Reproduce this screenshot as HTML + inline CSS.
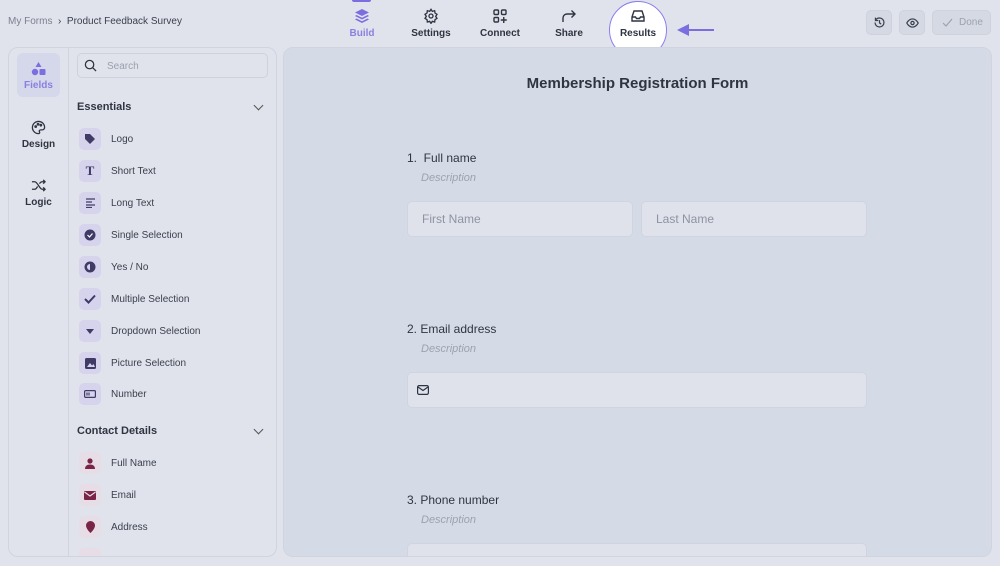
<!DOCTYPE html>
<html><head><meta charset="utf-8"><style>
*{box-sizing:border-box;margin:0;padding:0}
body{width:1000px;height:566px;background:#e0e3ec;font-family:"Liberation Sans",sans-serif;position:relative;overflow:hidden;color:#2f3441}
.a{position:absolute}
.crumb{left:8px;top:16px;font-size:10px;color:#3a3f4c}
.crumb span{color:#7c8190}
.nav{top:8px;width:60px;text-align:center;font-size:10px;font-weight:bold;color:#2f3441}
.nav svg{display:block;margin:0 auto 4px}
.btn{top:10px;height:25px;background:#d5d9e3;border-radius:5px;border:1px solid #cdd2dd}
.panel{left:8px;top:47px;width:269px;height:510px;border:1px solid #cfd4df;border-radius:10px;background:#e0e3ec}
.rail{left:68px;top:48px;width:1px;height:508px;background:#cfd4df}
.tab{left:17px;width:43px;height:44px;text-align:center;font-size:10px;font-weight:bold;color:#2f3441;border-radius:6px}
.tab svg{display:block;margin:9px auto 4px}
.search{left:77px;top:53px;width:191px;height:25px;border:1px solid #cdd2dd;border-radius:5px;font-size:10px;color:#9a9fad;padding:7px 0 0 29px}
.sec{left:77px;font-size:11px;font-weight:bold;color:#2f3441}
.chev{left:255px;width:7px;height:7px;border-right:1.3px solid #555;border-bottom:1.3px solid #555;transform:rotate(45deg)}
.it{left:79px;height:22px;width:200px;font-size:10px;color:#3a3f4c}
.ib{position:absolute;left:0;top:0;width:22px;height:22px;border-radius:5px;background:#d5d4ec;display:flex;align-items:center;justify-content:center}
.ib.r{background:#e6dde6}
.it span{position:absolute;left:32px;top:6px}
.canvas{left:283px;top:47px;width:709px;height:510px;background:#d5dbe6;border-radius:10px;border:1px solid #cfd4df}
.q{font-size:12px;color:#2f3441}
.d{font-size:11px;font-style:italic;color:#9ca2b0}
.inp{background:#dfe2eb;border:1px solid #cfd4df;border-radius:5px;font-size:12px;color:#8d93a1;padding:10px 0 0 14px}
</style></head><body>
<div class="a crumb"><span>My Forms</span> &nbsp;›&nbsp; Product Feedback Survey</div>

<div class="a" style="left:352px;top:0;width:19px;height:2px;background:#7b6fe0;border-radius:0 0 2px 2px"></div>
<div class="a nav" style="left:332px;color:#8a80e0"><svg width="16" height="16" viewBox="0 0 16 16" fill="#7b6fe0"><path d="M8 1L15 4.5 8 8 1 4.5z"/><path d="M2.5 7L8 9.8 13.5 7 15 8 8 11.5 1 8z"/><path d="M2.5 10.5L8 13.3 13.5 10.5 15 11.5 8 15 1 11.5z"/></svg>Build</div>
<div class="a nav" style="left:401px"><svg width="16" height="16" viewBox="0 0 24 24" fill="none" stroke="#2f3441" stroke-width="2"><circle cx="12" cy="12" r="3"/><path d="M12 2l2 3 3.5-1 .5 3.5 3 2-2 3 2 3-3 2-.5 3.5-3.5-1-2 3-2-3-3.5 1-.5-3.5-3-2 2-3-2-3 3-2 .5-3.5 3.5 1z"/></svg>Settings</div>
<div class="a nav" style="left:470px"><svg width="16" height="16" viewBox="0 0 16 16" fill="none" stroke="#2f3441" stroke-width="1.4"><rect x="2" y="2" width="4.5" height="4.5" rx="1"/><rect x="9.5" y="2" width="4.5" height="4.5" rx="1"/><rect x="2" y="9.5" width="4.5" height="4.5" rx="1"/><path d="M11.75 9v6M8.75 12h6"/></svg>Connect</div>
<div class="a nav" style="left:539px"><svg width="16" height="16" viewBox="0 0 16 16" fill="none" stroke="#2f3441" stroke-width="1.4"><path d="M2 14V10a4 4 0 014-4h8M10.5 2.5L14 6l-3.5 3.5"/></svg>Share</div>
<div class="a" style="left:609px;top:1px;width:58px;height:58px;border-radius:50%;background:#fff;border:1.5px solid #8a7ff0"></div>
<div class="a nav" style="left:608px"><svg width="16" height="16" viewBox="0 0 16 16" fill="none" stroke="#2f3441" stroke-width="1.4"><path d="M2 9l2-6h8l2 6v4H2z"/><path d="M2 9h3.5l1 1.5h3L10.5 9H14"/></svg>Results</div>
<svg class="a" style="left:676px;top:23px" width="40" height="14" viewBox="0 0 40 14"><path d="M12 7H38" stroke="#7b6fe0" stroke-width="2"/><path d="M1 7L13 1v12z" fill="#7b6fe0"/></svg>

<div class="a btn" style="left:866px;width:26px"><svg style="margin:5px 0 0 6px" width="13" height="13" viewBox="0 0 16 16" fill="none" stroke="#3a3f4c" stroke-width="1.5"><path d="M2.5 8a5.5 5.5 0 105.5-5.5A5.5 5.5 0 003 5.5M3 2v3.5h3.5M8 5v3.5l2 1.5"/></svg></div>
<div class="a btn" style="left:899px;width:26px"><svg style="margin:6px 0 0 6px" width="13" height="12" viewBox="0 0 16 14" fill="none" stroke="#3a3f4c" stroke-width="1.5"><path d="M1 7s2.5-5 7-5 7 5 7 5-2.5 5-7 5-7-5-7-5z"/><circle cx="8" cy="7" r="2"/></svg></div>
<div class="a btn" style="left:932px;width:59px;font-size:10px;color:#9ca2b0;padding:6px 0 0 26px"><svg class="a" style="left:9px;top:7px" width="11" height="9" viewBox="0 0 11 9" fill="none" stroke="#9ca2b0" stroke-width="1.2"><path d="M1 5l3 3 6-7"/></svg>Done</div>

<div class="a panel"></div>
<div class="a rail"></div>
<div class="a tab" style="top:53px;background:#d5d7ea;color:#8a80e0"><svg width="15" height="14" viewBox="0 0 15 14" fill="#7b6fe0"><path d="M7.5 0l3 5h-6z"/><circle cx="4" cy="10" r="3.2"/><rect x="8.5" y="7" width="6" height="6" rx="1"/></svg>Fields</div>
<div class="a tab" style="top:111px"><svg width="15" height="15" viewBox="0 0 16 16" fill="none" stroke="#2f3441" stroke-width="1.4"><path d="M8 1.5a6.5 6.5 0 000 13c1.2 0 1.5-1 1-2s0-2 1.5-2H12a2.5 2.5 0 002.5-2.5C14.5 4 11.5 1.5 8 1.5z"/><circle cx="5" cy="7" r=".8"/><circle cx="7.5" cy="4.5" r=".8"/><circle cx="10.5" cy="5.5" r=".8"/></svg>Design</div>
<div class="a tab" style="top:169px"><svg width="15" height="15" viewBox="0 0 16 16" fill="none" stroke="#2f3441" stroke-width="1.4"><path d="M1 4h3c3 0 5 8 8 8h3M1 12h3c1.5 0 2.5-2 3-3M9 6c.7-1 1.5-2 3-2h3M13 2l2 2-2 2M13 10l2 2-2 2"/></svg>Logic</div>

<div class="a search"><svg class="a" style="left:6px;top:5px" width="13" height="13" viewBox="0 0 14 14" fill="none" stroke="#2f3441" stroke-width="1.4"><circle cx="6" cy="6" r="4.5"/><path d="M9.5 9.5L13 13"/></svg>Search</div>

<div class="a sec" style="top:101px">Essentials</div><div class="a chev" style="top:102px"></div>
<div class="a it" style="top:128px"><div class="ib"><svg width="12" height="12" viewBox="0 0 12 12" fill="#3f3a66"><path d="M1 1h5l5 5-5 5-5-5z"/></svg></div><span>Logo</span></div>
<div class="a it" style="top:160px"><div class="ib" style="font:bold 13px 'Liberation Serif',serif;color:#3f3a66">T</div><span>Short Text</span></div>
<div class="a it" style="top:192px"><div class="ib"><svg width="11" height="10" viewBox="0 0 11 10" stroke="#3f3a66" stroke-width="1.3"><path d="M1 1h9M1 4h6M1 7h9M1 9.5h6"/></svg></div><span>Long Text</span></div>
<div class="a it" style="top:224px"><div class="ib"><svg width="12" height="12" viewBox="0 0 12 12"><circle cx="6" cy="6" r="5.5" fill="#3f3a66"/><path d="M3.5 6l2 2 3-3.5" stroke="#fff" stroke-width="1.2" fill="none"/></svg></div><span>Single Selection</span></div>
<div class="a it" style="top:256px"><div class="ib"><svg width="12" height="12" viewBox="0 0 12 12"><circle cx="6" cy="6" r="5.5" fill="#3f3a66"/><path d="M6 3a3 3 0 000 6z" fill="#d5d4ec"/></svg></div><span>Yes / No</span></div>
<div class="a it" style="top:288px"><div class="ib"><svg width="12" height="10" viewBox="0 0 12 10" fill="none" stroke="#3f3a66" stroke-width="2"><path d="M1 5l3.5 3.5L11 1.5"/></svg></div><span>Multiple Selection</span></div>
<div class="a it" style="top:320px"><div class="ib"><svg width="8" height="5" viewBox="0 0 8 5" fill="#3f3a66"><path d="M0 0h8L4 5z"/></svg></div><span>Dropdown Selection</span></div>
<div class="a it" style="top:352px"><div class="ib"><svg width="11" height="11" viewBox="0 0 11 11"><rect width="11" height="11" rx="1.5" fill="#3f3a66"/><path d="M2 9l3-4 2 2.5 1.5-1.5L10 9z" fill="#d5d4ec"/></svg></div><span>Picture Selection</span></div>
<div class="a it" style="top:383px"><div class="ib"><svg width="12" height="8" viewBox="0 0 12 8" fill="none" stroke="#3f3a66" stroke-width="1.2"><rect x=".6" y=".6" width="10.8" height="6.8" rx="1"/><path d="M3 2.5v3M5 2.5v3"/></svg></div><span>Number</span></div>

<div class="a sec" style="top:425px">Contact Details</div><div class="a chev" style="top:426px"></div>
<div class="a it" style="top:452px"><div class="ib r"><svg width="10" height="11" viewBox="0 0 10 11" fill="#7a2448"><circle cx="5" cy="3" r="2.6"/><path d="M0 11c0-3 2-4.5 5-4.5s5 1.5 5 4.5z"/></svg></div><span>Full Name</span></div>
<div class="a it" style="top:484px"><div class="ib r"><svg width="12" height="9" viewBox="0 0 12 9"><rect width="12" height="9" rx="1" fill="#7a2448"/><path d="M0.5 1l5.5 4 5.5-4" stroke="#e6dde6" stroke-width="1.2" fill="none"/></svg></div><span>Email</span></div>
<div class="a it" style="top:516px"><div class="ib r"><svg width="9" height="12" viewBox="0 0 9 12" fill="#7a2448"><path d="M4.5 0A4.5 4.5 0 000 4.5C0 8 4.5 12 4.5 12S9 8 9 4.5A4.5 4.5 0 004.5 0z"/></svg></div><span>Address</span></div>
<div class="a" style="left:79px;top:548px;width:22px;height:8px;border-radius:5px 5px 0 0;background:#e6dde6"></div>

<div class="a canvas"></div>
<div class="a" style="left:283px;width:709px;top:75px;text-align:center;font-size:15px;font-weight:bold;color:#2f3441">Membership Registration Form</div>

<div class="a q" style="left:407px;top:151px">1.&nbsp; Full name</div>
<div class="a d" style="left:421px;top:172px">Description</div>
<div class="a inp" style="left:407px;top:201px;width:226px;height:36px">First Name</div>
<div class="a inp" style="left:641px;top:201px;width:226px;height:36px">Last Name</div>

<div class="a q" style="left:407px;top:322px">2. Email address</div>
<div class="a d" style="left:421px;top:343px">Description</div>
<div class="a inp" style="left:407px;top:372px;width:460px;height:36px"><svg class="a" style="left:9px;top:12px" width="12" height="10" viewBox="0 0 12 10" fill="none" stroke="#2f3441" stroke-width="1.2"><rect x=".6" y=".6" width="10.8" height="8.8" rx="1.5"/><path d="M1 2l5 3.5L11 2"/></svg></div>

<div class="a q" style="left:407px;top:493px">3. Phone number</div>
<div class="a d" style="left:421px;top:514px">Description</div>
<div class="a inp" style="left:407px;top:543px;width:460px;height:13px;border-bottom:none;border-radius:5px 5px 0 0"></div>
<div class="a" style="left:0;top:557px;width:1000px;height:9px;background:#e0e3ec"></div>
</body></html>
